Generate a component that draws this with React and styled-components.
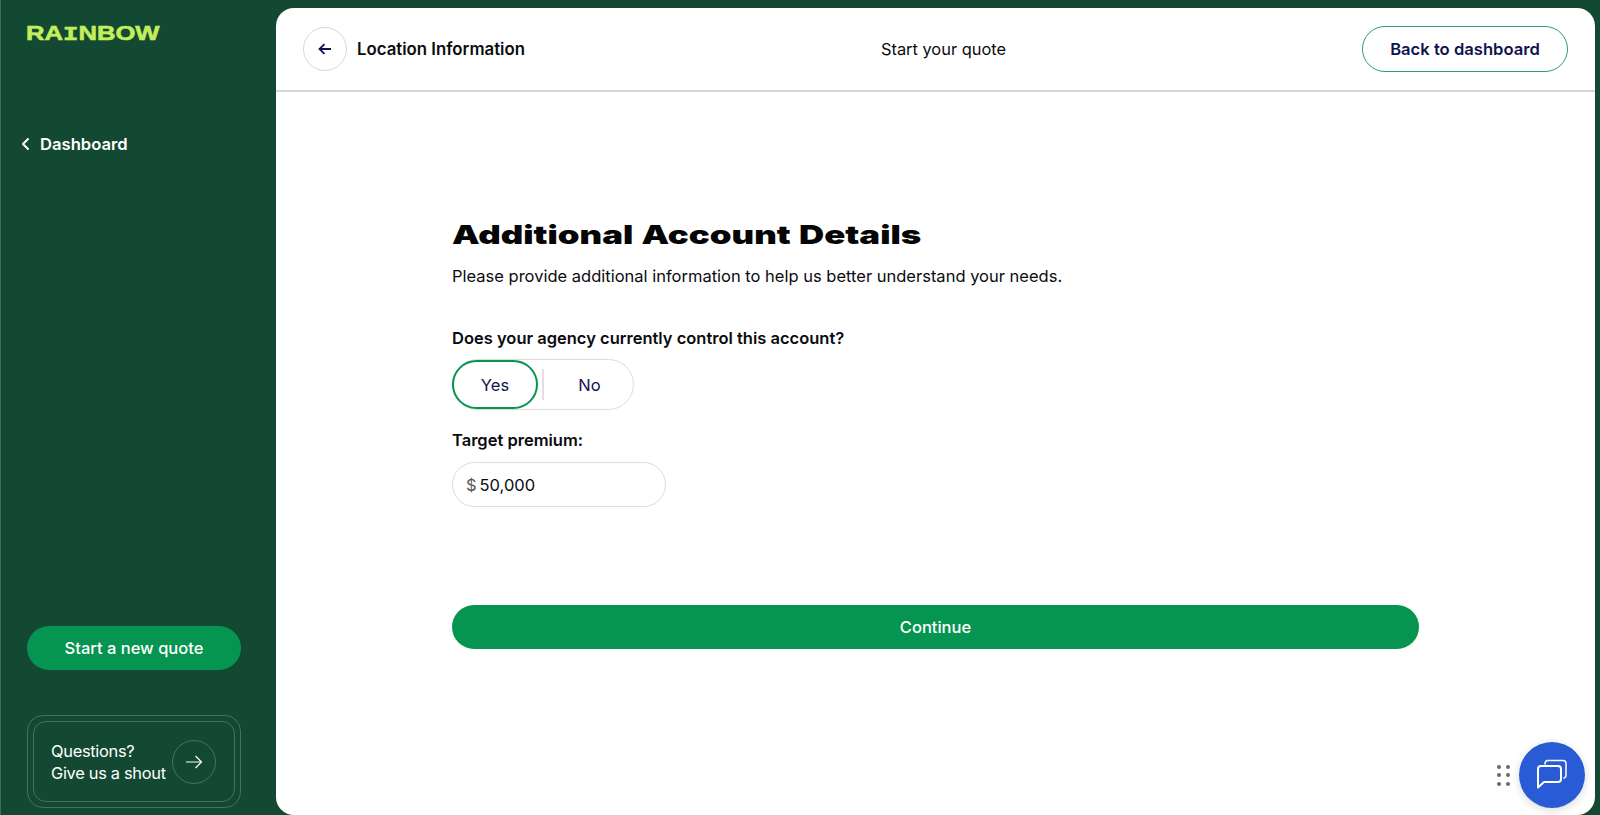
import React from "react";
import styled, { createGlobalStyle } from "styled-components";

const Global = createGlobalStyle`
  html, body { margin: 0; padding: 0; height: 100%; background: #134932; overflow: hidden; }
  * { box-sizing: border-box; }
  body { font-family: Inter, "Liberation Sans", sans-serif; }
`;

const Page = styled.div`
  position: relative;
  display: flex;
  width: 1600px;
  height: 815px;
  padding: 8px 5px 0 0;
  background: #134932;
  overflow: hidden;
`;

const Sidebar = styled.aside`
  flex: 0 0 276px;
  display: flex;
  flex-direction: column;
  height: 815px;
  margin-top: -8px;
  padding: 24px 35px 7px 26px;
  border-left: 1px solid #3f6d59;
`;

const Logo = styled.div`
  height: 18px;
  margin-left: -1px;
  font-family: "Liberation Sans", sans-serif;
  font-weight: 700;
  font-size: 21px;
  line-height: 18px;
  color: #c3ee5c;
  transform: scaleX(1.22);
  transform-origin: left center;
  white-space: nowrap;
  -webkit-text-stroke: 0.6px #c3ee5c;
`;

const LogoSerif = styled.span`
  font-family: "Liberation Mono", monospace;
`;

const NavLink = styled.div`
  display: flex;
  align-items: center;
  gap: 10px;
  margin: 92px 0 0 -6px;
  height: 20px;
  color: #fff;
  font-size: 16.6px;
  font-weight: 600;
`;

const Spacer = styled.div`
  flex: 1;
`;

const PrimaryButton = styled.button`
  display: block;
  width: ${(p) => p.$width};
  height: 44px;
  border: 0;
  border-radius: 22px;
  background: #069550;
  color: #fff;
  font: 500 16.5px Inter, "Liberation Sans", sans-serif;
  cursor: pointer;
`;

const HelpOuter = styled.div`
  margin-top: 45px;
  width: 214px;
  height: 93px;
  padding: 5px;
  border: 1px solid #47715f;
  border-radius: 16px;
`;

const HelpInner = styled.div`
  display: flex;
  align-items: center;
  justify-content: space-between;
  height: 100%;
  padding: 0 18px 0 17px;
  border: 1px solid #47715f;
  border-radius: 13px;
`;

const HelpText = styled.div`
  color: #fff;
  font-size: 16.4px;
  line-height: 22px;
  letter-spacing: -0.3px;
  white-space: nowrap;
`;

const HelpCircle = styled.div`
  flex: 0 0 44px;
  display: flex;
  align-items: center;
  justify-content: center;
  width: 44px;
  height: 44px;
  border: 1px solid #47715f;
  border-radius: 50%;
`;

const Main = styled.main`
  flex: 1;
  display: flex;
  flex-direction: column;
  background: #fff;
  border-radius: 18px;
`;

const Header = styled.header`
  display: flex;
  align-items: center;
  justify-content: space-between;
  height: 84px;
  padding: 0 27px;
  border-bottom: 2px solid #d6d6dc;
`;

const HeaderLeft = styled.div`
  display: flex;
  align-items: center;
  gap: 10px;
`;

const BackCircle = styled.div`
  display: flex;
  align-items: center;
  justify-content: center;
  width: 44px;
  height: 44px;
  border: 1px solid #d9d9dd;
  border-radius: 50%;
`;

const HeaderTitle = styled.div`
  font-size: 16.8px;
  font-weight: 600;
  color: #0b0b0f;
  white-space: nowrap;
`;

const HeaderCenter = styled.div`
  font-size: 16.4px;
  color: #0b0b0f;
  white-space: nowrap;
`;

const OutlineButton = styled.button`
  width: 206px;
  height: 46px;
  border: 1px solid #2f9a6a;
  border-radius: 23px;
  background: #fff;
  color: #10124f;
  font: 600 16.6px Inter, "Liberation Sans", sans-serif;
`;

const Form = styled.section`
  align-self: center;
  width: 967px;
  padding-top: 128px;
`;

const Heading = styled.h1`
  margin: 0;
  height: 30px;
  font-size: 26px;
  line-height: 30px;
  font-weight: 900;
  color: #050505;
  white-space: nowrap;
  word-spacing: 1px;
  transform: scaleX(1.34);
  transform-origin: left center;
`;

const Sub = styled.p`
  margin: 16px 0 0;
  font-size: 16.5px;
  line-height: 20px;
  color: #0b0b0f;
`;

const Label = styled.div`
  margin-top: ${(p) => p.$top};
  font-size: 16.5px;
  line-height: 20px;
  font-weight: 600;
  color: #0b0b0f;
`;

const Toggle = styled.div`
  display: flex;
  align-items: center;
  margin-top: 11px;
  width: 182px;
  height: 51px;
  border: 1px solid #dcdcdf;
  border-radius: 26px;
`;

const ToggleOption = styled.div`
  display: flex;
  align-items: center;
  justify-content: center;
  width: ${(p) => p.$width};
  height: 49px;
  font-size: 16.5px;
  color: #10124f;
  border-radius: 25px;
  margin-left: ${(p) => (p.$selected ? "-1px" : "0")};
  border: ${(p) => (p.$selected ? "2px solid #069550" : "0")};
`;

const ToggleDivider = styled.div`
  flex: 0 0 2px;
  height: 31px;
  margin: 0 4px;
  background: #e0e0e3;
`;

const Input = styled.div`
  display: flex;
  align-items: center;
  gap: 3px;
  margin-top: 12px;
  width: 214px;
  height: 45px;
  padding-left: 13px;
  border: 1px solid #dcdcdf;
  border-radius: 23px;
  font-size: 16.5px;
  color: #0b0b0f;
`;

const Currency = styled.span`
  color: #55555c;
`;

const ContinueRow = styled.div`
  margin-top: 98px;
`;

const Chat = styled.div`
  position: absolute;
  right: 15px;
  bottom: 7px;
  display: flex;
  align-items: center;
  gap: 9px;
`;

const Dots = styled.div`
  display: grid;
  grid-template-columns: 4px 4px;
  gap: 4.5px;
  column-gap: 5px;
`;

const Dot = styled.span`
  width: 4px;
  height: 4px;
  border-radius: 50%;
  background: #6a6a6a;
`;

const ChatButton = styled.div`
  display: flex;
  align-items: center;
  justify-content: center;
  width: 66px;
  height: 66px;
  border-radius: 50%;
  background: #2a5bd7;
  box-shadow: 0 2px 8px rgba(0, 0, 0, 0.15);
`;

export default function App() {
  return (
    <>
      <Global />
      <Page>
        <Sidebar>
          <Logo>
            RA<LogoSerif>I</LogoSerif>NBOW
          </Logo>
          <NavLink>
            <svg width="9" height="14" viewBox="0 0 9 14" fill="none">
              <path d="M7 2 L2 7 L7 12" stroke="#fff" strokeWidth="2" strokeLinecap="round" strokeLinejoin="round" />
            </svg>
            Dashboard
          </NavLink>
          <Spacer />
          <PrimaryButton $width="214px">Start a new quote</PrimaryButton>
          <HelpOuter>
            <HelpInner>
              <HelpText>
                Questions?
                <br />
                Give us a shout
              </HelpText>
              <HelpCircle>
                <svg width="18" height="14" viewBox="0 0 18 14" fill="none">
                  <path d="M1 7 H16 M10.5 1 L16.5 7 L10.5 13" stroke="#fff" strokeWidth="1.2" />
                </svg>
              </HelpCircle>
            </HelpInner>
          </HelpOuter>
        </Sidebar>
        <Main>
          <Header>
            <HeaderLeft>
              <BackCircle>
                <svg width="14" height="12" viewBox="0 0 14 12" fill="none">
                  <path d="M13 6 H2 M6.5 1.2 L1.5 6 L6.5 10.8" stroke="#10124f" strokeWidth="1.8" />
                </svg>
              </BackCircle>
              <HeaderTitle>Location Information</HeaderTitle>
            </HeaderLeft>
            <HeaderCenter>Start your quote</HeaderCenter>
            <OutlineButton>Back to dashboard</OutlineButton>
          </Header>
          <Form>
            <Heading>Additional Account Details</Heading>
            <Sub>Please provide additional information to help us better understand your needs.</Sub>
            <Label $top="42px">Does your agency currently control this account?</Label>
            <Toggle>
              <ToggleOption $selected $width="86px">Yes</ToggleOption>
              <ToggleDivider />
              <ToggleOption $width="83px">No</ToggleOption>
            </Toggle>
            <Label $top="20px">Target premium:</Label>
            <Input>
              <Currency>$</Currency>
              50,000
            </Input>
            <ContinueRow>
              <PrimaryButton $width="967px">Continue</PrimaryButton>
            </ContinueRow>
          </Form>
        </Main>
        <Chat>
          <Dots>
            {Array.from({ length: 6 }, (_, i) => (
              <Dot key={i} />
            ))}
          </Dots>
          <ChatButton>
            <svg width="32" height="32" viewBox="0 0 32 32" fill="none">
              <path d="M9 5 Q9 1.5 12 1.5 H27 Q30 1.5 30 4.5 V16 Q30 18.5 28 19" stroke="#fff" strokeWidth="1.5" strokeLinecap="round" />
              <path d="M2 28.5 V10 Q2 7 5 7 H22 Q25 7 25 10 V20 Q25 23 22 23 H8 Z" stroke="#fff" strokeWidth="2" strokeLinejoin="round" />
            </svg>
          </ChatButton>
        </Chat>
      </Page>
    </>
  );
}
